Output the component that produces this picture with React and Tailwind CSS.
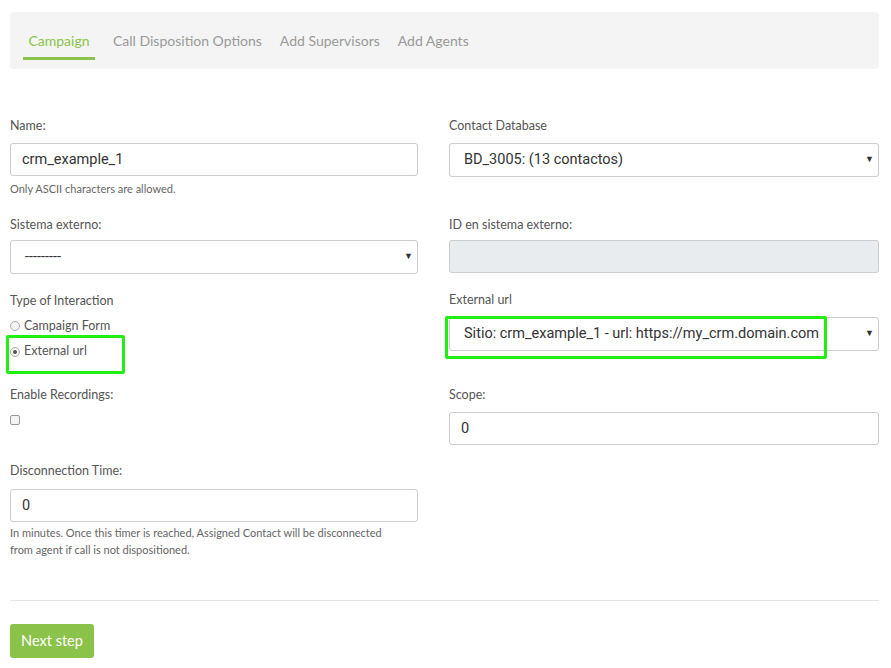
const F = { fontFamily: "Lato, 'Open Sans', sans-serif" };
const R = { fontFamily: "Roboto, 'Open Sans', sans-serif" };

function Label({ children, className = "" }) {
  return <div className={`text-[12.5px] text-[#555] leading-4 ${className}`}>{children}</div>;
}
function Input({ value, disabled }) {
  return (
    <div style={R} className={`h-[33px] border border-[#ccc] rounded-[3px] px-[11px] flex items-center text-[14.5px] text-[#333] ${disabled ? "bg-[#e9ecef]" : "bg-white"}`}>{value}</div>
  );
}
function Select({ value }) {
  return (
    <div style={R} className="h-[34px] border border-[#ccc] rounded-[3px] pl-[14px] pr-[4px] flex items-center justify-between text-[14.5px] text-[#333] bg-white">
      <span>{value}</span><span className="text-[9px] text-[#333]">▼</span>
    </div>
  );
}

export default function App() {
  return (
    <div style={F} className="w-[891px] h-[668px] bg-white relative">
      <div className="absolute left-[10px] top-[12px] w-[869px] h-[57px] bg-[#f4f4f4] rounded-[4px] flex items-start pl-[13px] gap-[18px] pt-[18px] text-[14px]">
        <div className="flex flex-col items-center">
          <span className="text-[#8bc34a] px-[3px]">Campaign</span>
          <div className="h-[3px] w-[72px] bg-[#8bc34a] mt-[6px]" />
        </div>
        <span className="text-[#999]">Call Disposition Options</span>
        <span className="text-[#999]">Add Supervisors</span>
        <span className="text-[#999]">Add Agents</span>
      </div>

      <div className="absolute left-[10px] top-[118px] w-[869px] flex gap-[31px]">
        <div className="w-[408px] flex flex-col">
          <Label>Name:</Label>
          <div className="mt-[9px]"><Input value="crm_example_1" /></div>
          <div className="text-[11px] text-[#666] mt-[5px]">Only ASCII characters are allowed.</div>
          <Label className="mt-[19px]">Sistema externo:</Label>
          <div className="mt-[7px]"><Select value="---------" /></div>
          <Label className="mt-[19px]">Type of Interaction</Label>
          <div className="mt-[8px] flex items-center gap-[4px] text-[12.5px] text-[#555]">
            <span className="w-[10px] h-[10px] rounded-full border border-[#aaa] bg-[#f4f4f4]" />Campaign Form
          </div>
          <div className="mt-[7px] flex items-center gap-[4px] text-[12.5px] text-[#555]">
            <span className="w-[10px] h-[10px] rounded-full border border-[#aaa] bg-[#f4f4f4] flex items-center justify-center"><span className="w-[4px] h-[4px] rounded-full bg-[#555]" /></span>External url
          </div>
          <Label className="mt-[26px]">Enable Recordings:</Label>
          <div className="mt-[12px] w-[10px] h-[10px] rounded-[2px] border border-[#999] bg-[#f4f4f4]" />
          <Label className="mt-[38px]">Disconnection Time:</Label>
          <div className="mt-[10px]"><Input value="0" /></div>
          <div className="text-[11px] text-[#666] mt-[2px] leading-[17px]">In minutes. Once this timer is reached, Assigned Contact will be disconnected<br />from agent if call is not dispositioned.</div>
        </div>
        <div className="w-[430px] flex flex-col">
          <Label>Contact Database</Label>
          <div className="mt-[9px]"><Select value="BD_3005: (13 contactos)" /></div>
          <Label className="mt-[40px]">ID en sistema externo:</Label>
          <div className="mt-[7px]"><Input value="" disabled /></div>
          <Label className="mt-[19px]">External url</Label>
          <div className="mt-[9px]"><Select value="Sitio: crm_example_1 - url: https://my_crm.domain.com" /></div>
          <Label className="mt-[36px]">Scope:</Label>
          <div className="mt-[9px]"><Input value="0" /></div>
        </div>
      </div>

      <div className="absolute left-[6px] top-[335px] w-[119px] h-[39px] border-[3px] border-[#22ee11] rounded-[2px]" />
      <div className="absolute left-[445px] top-[316px] w-[382px] h-[43px] border-[3px] border-[#22ee11] rounded-[2px]" />

      <div className="absolute left-[10px] top-[600px] w-[869px] h-px bg-[#e5e5e5]" />
      <div className="absolute left-[10px] top-[624px] w-[84px] h-[34px] bg-[#8bc34a] rounded-[3px] text-white text-[14.5px] flex items-center justify-center">Next step</div>
    </div>
  );
}
